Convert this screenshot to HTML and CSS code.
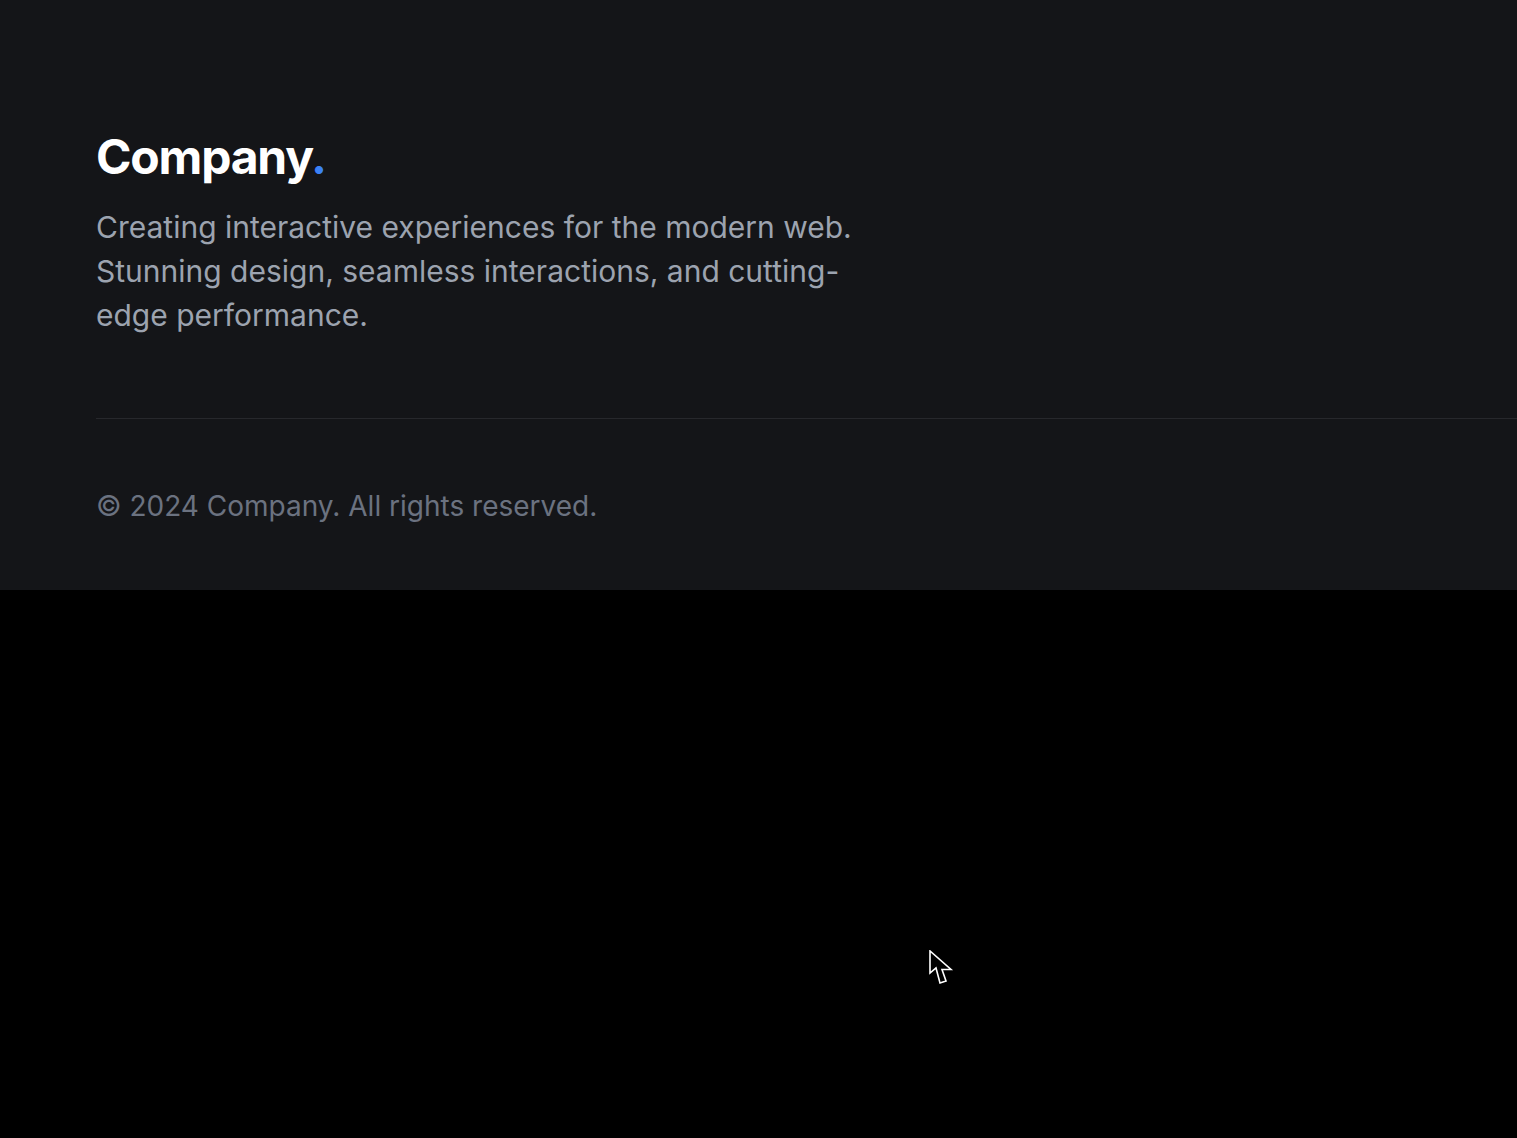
FILE: index.html
```html
<!DOCTYPE html>
<html lang="en">
<head>
    <meta charset="UTF-8">
    <meta name="viewport" content="width=device-width, initial-scale=1.0">
    <title>Company</title>
    <link rel="stylesheet" href="styles.css">
</head>
<body>
    <footer class="site-footer">
        <div class="footer-brand">
            <h2 class="brand-name">Company<span class="brand-dot">.</span></h2>
            <p class="brand-text">Creating interactive experiences for the modern web. Stunning design, seamless interactions, and cutting-edge performance.</p>
        </div>
        <div class="footer-bottom">
            <p class="copyright">&copy; 2024 Company. All rights reserved.</p>
        </div>
    </footer>

    <!-- mouse pointer caught in the shot -->
    <svg class="pointer" width="26" height="38" viewBox="0 0 26 38">
        <polygon points="1,1 1,23 7,18 11,33 17,31 13,19.5 22,19.5" fill="#000" stroke="#fff" stroke-width="1.6" stroke-linejoin="miter"/>
    </svg>
</body>
</html>
```

FILE: styles.css
```css
html, body {
    margin: 0;
    padding: 0;
}

body {
    background-color: #000;
    font-family: 'Inter', 'Noto Sans', sans-serif;
    min-height: 1138px;
    position: relative;
}

.site-footer {
    background-color: #141518;
    padding: 128px 0 66px 96px;
}

.brand-name {
    margin: 0;
    font-size: 48px;
    line-height: 1.2;
    font-weight: 700;
    letter-spacing: -0.025em;
    color: #fff;
}

.brand-dot {
    color: #3b82f6;
}

.brand-text {
    margin: 19px 0 0;
    max-width: 768px;
    font-size: 30px;
    line-height: 44px;
    color: #9ca3af;
}

.footer-bottom {
    margin-top: 81px;
    border-top: 1px solid #27282c;
    padding-top: 69px;
}

.copyright {
    margin: 0;
    font-size: 28px;
    line-height: 36px;
    color: #6b7280;
}

.pointer {
    position: absolute;
    left: 929px;
    top: 950px;
}
```
